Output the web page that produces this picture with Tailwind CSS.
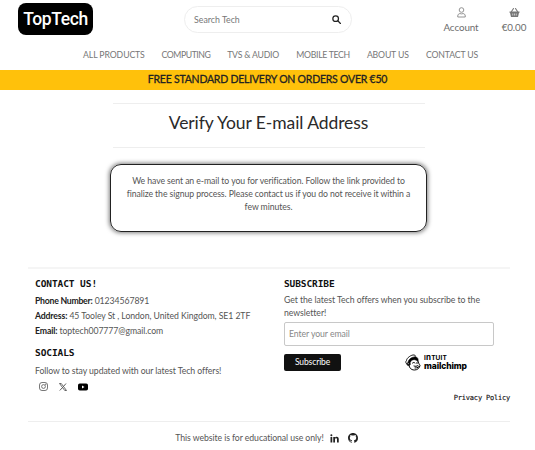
<!DOCTYPE html>
<html lang="en">
<head>
<meta charset="utf-8">
<title>Verify Your E-mail Address</title>
<script src="https://cdn.jsdelivr.net/npm/@tailwindcss/browser@4"></script>
</head>
<body class="h-[450px] w-[535px] overflow-hidden bg-white font-[Lato,sans-serif] text-[8.7px] tracking-[-0.07px] text-[#555] whitespace-nowrap">
<header class="flex h-[70px] flex-col">
  <div class="flex h-[40px] items-start">
    <a class="mt-[3px] ml-[18px] flex h-8 w-[75px] items-center justify-center rounded-[8px] bg-black pt-px font-[Roboto,sans-serif] text-[17.5px] font-medium tracking-[-0.4px] text-white">TopTech</a>
    <div class="mt-[6px] ml-[91px] flex h-[27px] w-[168px] items-center justify-between rounded-full border border-[#eeeeee] pr-[10px] pl-[9px]">
      <span class="text-[8.8px] tracking-[0px] text-[#777]">Search Tech</span>
      <svg class="size-[9px]" viewBox="0 0 16 16" fill="none" stroke="#222" stroke-width="2.2" stroke-linecap="round"><circle cx="6.5" cy="6.5" r="5"/><path d="M10.3 10.3L15 15"/></svg>
    </div>
    <div class="mt-[7px] ml-[85px] flex w-[48px] flex-col items-center text-[9.8px] text-[#6c6c6c]">
      <svg class="h-[11px] w-[9px]" viewBox="0 0 18 22" fill="none" stroke="#888" stroke-width="1.8"><circle cx="9" cy="6" r="4.6"/><path d="M1.5 20v-2c0-3 2-4.8 4.5-4.8 1.2 0 1.8.6 3 .6s1.8-.6 3-.6c2.5 0 4.5 1.8 4.5 4.8v2z" stroke-linejoin="round"/></svg>
      <span class="mt-[2px] leading-[14px]">Account</span>
    </div>
    <div class="mt-[7px] ml-[9px] flex w-[40px] flex-col items-center text-[9.8px] text-[#6c6c6c]">
      <svg class="h-[11px] w-[11px]" viewBox="0 0 22 22" fill="#777"><path d="M1 9h20v2.500H20L18 20H4L2 11.500H1z"/><path d="M5 9l4-6M17 9l-4-6" stroke="#777" stroke-width="2.200" stroke-linecap="round"/><path d="M7.500 13v4M11 13v4M14.500 13v4" stroke="#fff" stroke-width="1.200"/></svg>
      <span class="mt-[2px] leading-[14px]">€0.00</span>
    </div>
  </div>
  <nav class="flex h-[30px] items-center gap-[16.6px] pl-[83px] text-[8.7px] text-[#777]">
    <a class="w-[62px] tracking-[-0.1px]">ALL PRODUCTS</a><a class="w-[49px] tracking-[-0.45px]">COMPUTING</a><a class="w-[52.5px] tracking-[-0.2px]">TVS &amp; AUDIO</a><a class="w-[54px] tracking-[-0.3px]">MOBILE TECH</a><a class="w-[42.500px] tracking-[-0.15px]">ABOUT US</a><a class="w-[52px] tracking-[-0.15px]">CONTACT US</a>
  </nav>
</header>
<div class="flex h-5 items-center justify-center bg-[#ffc10b] text-[10.5px] tracking-[-0.22px] text-[#222] [-webkit-text-stroke:0.3px_#222]">FREE STANDARD DELIVERY ON ORDERS OVER €50</div>
<main class="flex h-[177px] flex-col items-center pt-[13px] pl-[2px]">
  <div class="flex h-[45px] w-[312px] items-center justify-center border-y border-[#eeeeee] pb-[4px] text-[17.500px] tracking-[-0.08px] text-[#2a2a2a]">Verify Your E-mail Address</div>
  <div class="mt-4 h-[68px] w-[317px] rounded-[11px] border-[1.500px] border-[#222] pt-[9px] text-center leading-[13px] tracking-[-0.08px] shadow-[0_0_4px_1px_rgba(0,0,0,0.5)]">
    We have sent an e-mail to you for verification. Follow the link provided to<br>finalize the signup process. Please contact us if you do not receive it within a<br>few minutes.
  </div>
</main>
<footer class="ml-[28px] w-[482px]">
  <div class="flex h-[154px] border-t-2 border-[#f5f5f5] pl-[7px]">
    <section class="w-[249px] pt-[8px]">
      <h2 class="font-['DejaVu_Sans_Mono',monospace] text-[9.5px] leading-[13px] font-bold tracking-[-0.08px] text-[#111]">CONTACT US!</h2>
      <div class="mt-[3px] leading-[15px]">
        <p><b class="font-bold tracking-[-0.25px] text-[#222]">Phone Number:</b> 01234567891</p>
        <p><b class="font-bold tracking-[-0.15px] text-[#222]">Address:</b> 45 Tooley St , London, United Kingdom, SE1 2TF</p>
        <p><b class="font-bold tracking-[-0.15px] text-[#222]">Email:</b> toptech007777@gmail.com</p>
      </div>
      <h2 class="mt-[8px] font-['DejaVu_Sans_Mono',monospace] text-[9.5px] leading-[13px] font-bold tracking-[-0.08px] text-[#111]">SOCIALS</h2>
      <p class="mt-[4px] leading-[15px]">Follow to stay updated with our latest Tech offers!</p>
      <div class="mt-[4px] flex items-center gap-[11px] pl-[4px]">
        <svg class="size-[9px]" viewBox="0 0 18 18" fill="none" stroke="#555" stroke-width="1.600"><rect x="1" y="1" width="16" height="16" rx="5"/><circle cx="9" cy="9" r="3.800"/><circle cx="13.500" cy="4.500" r=".6"/></svg>
        <svg class="size-[8px]" viewBox="0 0 16 16"><path d="M1 1h3.500L15 15h-3.500z" fill="none" stroke="#444" stroke-width="1.600"/><path d="M14 1L9 7M7 9l-5.500 6" stroke="#444" stroke-width="1.700"/></svg>
        <svg class="h-[8px] w-[10px]" viewBox="0 0 20 16"><rect y="1" width="20" height="14" rx="3.500" fill="#000"/><path d="M8 5l5 3-5 3z" fill="#fff"/></svg>
      </div>
    </section>
    <section class="w-[226px] pt-[8px]">
      <h2 class="font-['DejaVu_Sans_Mono',monospace] text-[9.5px] leading-[13px] font-bold tracking-[-0.1px] text-[#111]">SUBSCRIBE</h2>
      <p class="mt-[3px] leading-[13px] tracking-[-0.05px]">Get the latest Tech offers when you subscribe to the<br>newsletter!</p>
      <div class="mt-[3px] flex h-6 w-[210px] items-center rounded-[2px] border border-[#c8c8c8] pl-[4px] text-[8.700px] text-[#888]">Enter your email</div>
      <div class="mt-[8px] flex h-[17px]">
        <button class="h-[17px] w-[57px] rounded-[2px] bg-[#111] text-[8.500px] tracking-[-0.1px] text-white">Subscribe</button>
        <div class="ml-[64px] flex items-center gap-[3px] text-black">
          <svg class="h-[17px] w-[16px]" viewBox="0 0 32 34" fill="none" stroke="#000" stroke-linecap="round"><path d="M7 21C2 21 0 16 3 13 3 8 13 1 18 2c3 0 3 2 2 4" stroke-width="1.800"/><path d="M7 14C9 8 16 5 22 6c4 1 5 5 4 9-4-4-9-5-13-2-2 2-1 4-4 5-3 0-3-2-2-4z" fill="#000"/><path d="M8 19c-1 8 4 13 11 13 6 0 10-4 11-9-2 3-5 5-10 5M26 14c1 3 1 5 3 7M15 18c2-2 4-1 5 0M24 17v2M18 24c3 1 5 1 8-1" stroke-width="2"/><circle cx="7" cy="20" r="3" stroke-width="2"/></svg>
          <div class="flex flex-col font-[Inter,sans-serif]">
            <span class="text-[6.500px] leading-[7px] font-bold tracking-[0.15px]">I<span class="text-[8px]">n</span>TUIT</span>
            <span class="text-[8.500px] leading-[9px] font-extrabold tracking-[-0.120px]">mailchimp</span>
          </div>
        </div>
      </div>
      <p class="mt-[22px] text-right font-['DejaVu_Sans_Mono',monospace] text-[7px] leading-[10px] tracking-[-0.200px] text-[#111] [-webkit-text-stroke:0.15px_#111]">Privacy Policy</p>
    </section>
  </div>
  <div class="flex h-[29px] items-center justify-center border-t border-[#eeeeee] pt-[4px] pr-[5px]">
    <span>This website is for educational use only!</span>
    <svg class="ml-[6px] size-[9px]" viewBox="0 0 18 18" fill="#222"><path d="M1 6h3.500v11H1zM6.500 6H10v1.500C10.500 6.500 12 5.600 13.500 5.600c3 0 4 2 4 5V17H14v-5.500c0-1.800-.5-2.800-1.800-2.800S10 9.700 10 11.500V17H6.500z"/><circle cx="2.700" cy="2.700" r="2"/></svg>
    <svg class="ml-[9px] size-[10px]" viewBox="0 0 16 16" fill="#222"><path d="M8 0C3.580 0 0 3.580 0 8c0 3.540 2.290 6.530 5.470 7.590.4.070.550-.170.550-.380v-1.490c-2.010.370-2.530-.490-2.690-.940-.090-.230-.480-.940-.820-1.130-.280-.150-.680-.520-.010-.530.630-.010 1.080.580 1.230.820.720 1.210 1.870.870 2.330.660.070-.520.280-.870.510-1.070-1.780-.200-3.640-.890-3.640-3.950 0-.870.310-1.590.820-2.150-.080-.200-.360-1.020.080-2.120 0 0 .670-.210 2.200.820.640-.180 1.320-.270 2-.270s1.360.090 2 .270c1.530-1.040 2.200-.820 2.200-.820.440 1.100.160 1.920.080 2.120.510.560.820 1.270.820 2.150 0 3.070-1.870 3.750-3.650 3.950.290.250.540.730.540 1.480v2.200c0 .210.150.460.550.380A8 8 0 0 0 16 8c0-4.420-3.580-8-8-8z"/></svg>
  </div>
</footer>
</body>
</html>
